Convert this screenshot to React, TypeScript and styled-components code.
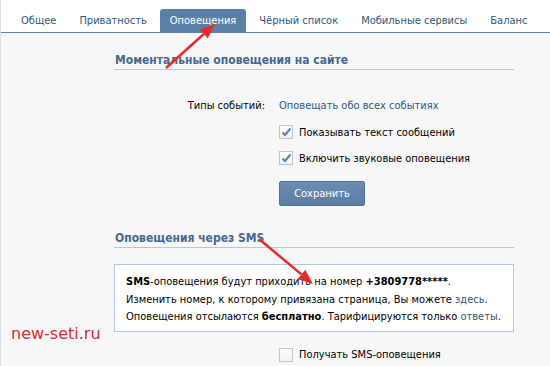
import React from "react";
import styled, { createGlobalStyle } from "styled-components";

const Global = createGlobalStyle`
  html, body { margin: 0; padding: 0; background: #f7f7f7; }
  body { font-family: "DejaVu Sans Condensed", "DejaVu Sans", Tahoma, sans-serif; font-size: 11px; color: #000; }
`;

const Page = styled.div`
  position: relative;
  width: 549px;
  height: 366px;
  border-left: 1px solid #d9e0e7;
  background: #f7f7f7;
  overflow: hidden;
`;

const TabBar = styled.div`
  display: flex;
  align-items: flex-end;
  gap: 3px;
  height: 32px;
  padding-left: 10px;
  background: #fff;
  border-bottom: 1px solid #5b7fa6;
`;

const Tab = styled.div<{ $active?: boolean }>`
  height: 23px;
  line-height: 24px;
  padding: 0 10px;
  border-radius: 3px 3px 0 0;
  white-space: nowrap;
  color: ${(p) => (p.$active ? "#fff" : "#2b587a")};
  background: ${(p) => (p.$active ? "#5b7fa6" : "transparent")};
`;

const Content = styled.div`
  width: 400px;
  margin-left: 113px;
`;

const SectionHeader = styled.div<{ $top: number }>`
  margin-top: ${(p) => p.$top}px;
  padding: 0 0 1px 1px;
  border-bottom: 1px solid #b6c7db;
  color: #45688e;
  font-weight: bold;
  font-size: 12px;
  line-height: 16px;
`;

const Row = styled.div<{ $top: number }>`
  display: flex;
  align-items: center;
  margin-top: ${(p) => p.$top}px;
  height: 16px;
`;

const Label = styled.div`
  width: 165px;
  padding-right: 14px;
  text-align: right;
  box-sizing: border-box;
  color: #000;
  flex: none;
`;

const Value = styled.div`
  display: flex;
  align-items: center;
  gap: 6px;
`;

const Spacer = styled.div`
  width: 165px;
  flex: none;
`;

const Link = styled.span`
  color: #2b587a;
`;

const Box = styled.span`
  display: inline-flex;
  align-items: center;
  justify-content: center;
  width: 12px;
  height: 12px;
  border: 1px solid #bcc6d1;
  background: linear-gradient(#fdfdfd, #f0f2f4);
  flex: none;
`;

const Button = styled.div`
  margin-top: 15px;
  margin-left: 165px;
  width: 84px;
  height: 23px;
  line-height: 23px;
  text-align: center;
  color: #fff;
  border: 1px solid #4c6f97;
  border-radius: 2px;
  background: linear-gradient(#6d8db2, #5a7ca3);
`;

const InfoBox = styled.div`
  margin-top: 16px;
  background: #fff;
  border: 1px solid #b6c7db;
  padding: 8px 11px 5px;
  line-height: 17.5px;
  white-space: nowrap;
`;

const Watermark = styled.div`
  position: absolute;
  left: 10px;
  top: 324px;
  color: #d42a3c;
  font-size: 16px;
  font-family: "DejaVu Sans", Verdana, sans-serif;
`;

const Overlay = styled.svg`
  position: absolute;
  left: 0;
  top: 0;
  pointer-events: none;
`;

const Check = ({ checked }: { checked?: boolean }) => (
  <Box>
    {checked && (
      <svg width="11" height="10" viewBox="0 0 11 10">
        <path d="M1.5 5.5 L4 8 L9.5 1.5" fill="none" stroke="#5a7fa6" strokeWidth="2" />
      </svg>
    )}
  </Box>
);

const Arrow = ({ x1, y1, x2, y2 }: { x1: number; y1: number; x2: number; y2: number }) => {
  const dx = x2 - x1;
  const dy = y2 - y1;
  const len = Math.hypot(dx, dy);
  const ux = dx / len;
  const uy = dy / len;
  const hl = 15;
  const hw = 6;
  const bx = x2 - ux * hl;
  const by = y2 - uy * hl;
  const p1 = `${bx - uy * hw},${by + ux * hw}`;
  const p2 = `${bx + uy * hw},${by - ux * hw}`;
  return (
    <g>
      <line x1={x1} y1={y1} x2={bx} y2={by} stroke="#e52b2b" strokeWidth="2.5" />
      <polygon points={`${x2},${y2} ${p1} ${p2}`} fill="#e52b2b" />
    </g>
  );
};

export default function App() {
  const tabs = ["Общее", "Приватность", "Оповещения", "Чёрный список", "Мобильные сервисы", "Баланс"];
  return (
    <Page>
      <Global />
      <TabBar>
        {tabs.map((t) => (
          <Tab key={t} $active={t === "Оповещения"}>
            {t}
          </Tab>
        ))}
      </TabBar>
      <Content>
        <SectionHeader $top={19}>Моментальные оповещения на сайте</SectionHeader>
        <Row $top={27}>
          <Label>Типы событий:</Label>
          <Link>Оповещать обо всех событиях</Link>
        </Row>
        <Row $top={11}>
          <Spacer />
          <Value>
            <Check checked />
            Показывать текст сообщений
          </Value>
        </Row>
        <Row $top={10}>
          <Spacer />
          <Value>
            <Check checked />
            Включить звуковые оповещения
          </Value>
        </Row>
        <Button>Сохранить</Button>
        <SectionHeader $top={24}>Оповещения через SMS</SectionHeader>
        <InfoBox>
          <div>
            <b>SMS</b>-оповещения будут приходить на номер <b>+3809778*****</b>.
          </div>
          <div>
            Изменить номер, к которому привязана страница, Вы можете <Link>здесь</Link>.
          </div>
          <div>
            Оповещения отсылаются <b>бесплатно</b>. Тарифицируются только <Link>ответы</Link>.
          </div>
        </InfoBox>
        <Row $top={15}>
          <Spacer />
          <Value>
            <Check />
            Получать SMS-оповещения
          </Value>
        </Row>
      </Content>
      <Watermark>new-seti.ru</Watermark>
      <Overlay width="550" height="366">
        <Arrow x1={165} y1={68} x2={214} y2={24} />
        <Arrow x1={258} y1={239} x2={312} y2={284} />
      </Overlay>
    </Page>
  );
}
